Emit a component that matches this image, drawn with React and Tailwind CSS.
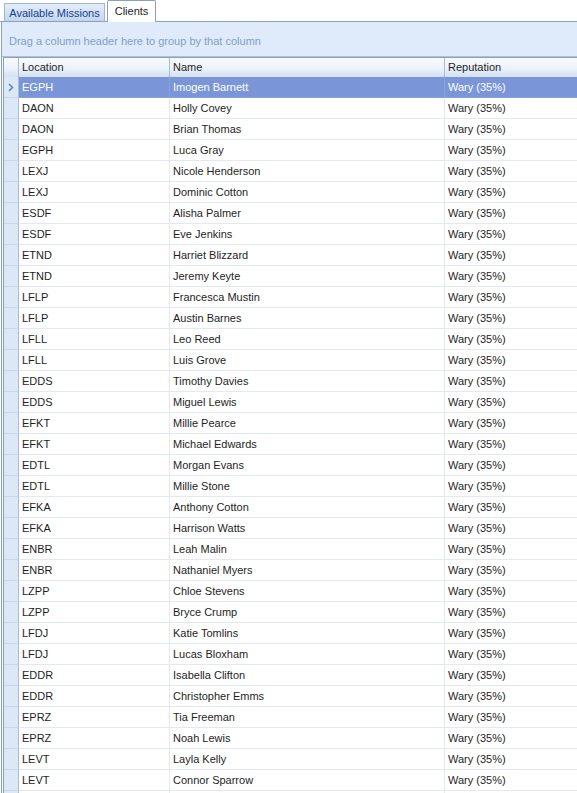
const rows = [
  ["EGPH", "Imogen Barnett"],
  ["DAON", "Holly Covey"],
  ["DAON", "Brian Thomas"],
  ["EGPH", "Luca Gray"],
  ["LEXJ", "Nicole Henderson"],
  ["LEXJ", "Dominic Cotton"],
  ["ESDF", "Alisha Palmer"],
  ["ESDF", "Eve Jenkins"],
  ["ETND", "Harriet Blizzard"],
  ["ETND", "Jeremy Keyte"],
  ["LFLP", "Francesca Mustin"],
  ["LFLP", "Austin Barnes"],
  ["LFLL", "Leo Reed"],
  ["LFLL", "Luis Grove"],
  ["EDDS", "Timothy Davies"],
  ["EDDS", "Miguel Lewis"],
  ["EFKT", "Millie Pearce"],
  ["EFKT", "Michael Edwards"],
  ["EDTL", "Morgan Evans"],
  ["EDTL", "Millie Stone"],
  ["EFKA", "Anthony Cotton"],
  ["EFKA", "Harrison Watts"],
  ["ENBR", "Leah Malin"],
  ["ENBR", "Nathaniel Myers"],
  ["LZPP", "Chloe Stevens"],
  ["LZPP", "Bryce Crump"],
  ["LFDJ", "Katie Tomlins"],
  ["LFDJ", "Lucas Bloxham"],
  ["EDDR", "Isabella Clifton"],
  ["EDDR", "Christopher Emms"],
  ["EPRZ", "Tia Freeman"],
  ["EPRZ", "Noah Lewis"],
  ["LEVT", "Layla Kelly"],
  ["LEVT", "Connor Sparrow"],
  ["", "", ""],
];

function Row({ loc, name, rep, selected }) {
  const line = selected ? "border-[#8aa3dd]" : "border-[#e2e9f4]";
  return (
    <div className={`flex h-[21px] ${selected ? "bg-[#7b96d8] text-white" : "text-[#1e1e1e]"}`}>
      <div className="w-[15px] shrink-0 bg-[#dde8f7] border-r border-[#a9bcd6] border-b border-b-[#c9d7ea] flex items-center justify-center">
        {selected && (
          <svg width="6" height="9" viewBox="0 0 6 9">
            <path d="M1 1 L4.5 4.5 L1 8" fill="none" stroke="#5d87c7" strokeWidth="1.6" />
          </svg>
        )}
      </div>
      <div className={`w-[151px] shrink-0 pl-[3px] pt-px flex items-center border-r border-b ${line}`}>{loc}</div>
      <div className={`w-[275px] shrink-0 pl-[3px] pt-px flex items-center border-r border-b ${line}`}>{name}</div>
      <div className={`flex-1 pl-[3px] pt-px flex items-center border-b ${line}`}>{rep}</div>
    </div>
  );
}

export default function App() {
  return (
    <div
      className="w-[577px] h-[793px] overflow-hidden bg-white text-[11px] leading-none"
      style={{ fontFamily: "Tahoma, 'Liberation Sans', Arial, sans-serif" }}
    >
      <div className="flex items-end h-[22px] pl-[4px] border-b border-[#8ba0bc]">
        <div className="h-[18px] w-[101px] pt-px flex items-center justify-center border border-b-0 border-[#a3b6d0] bg-gradient-to-b from-[#e4eefb] to-[#c3d6ef] text-[#15428b]">
          Available Missions
        </div>
        <div className="h-[22px] w-[49px] -mb-px ml-[2px] flex items-center justify-center border border-b-0 border-[#8ba0bc] bg-white text-[#1e1e1e] rounded-t-[2px]">
          Clients
        </div>
      </div>
      <div className="ml-[1px] border-l border-[#8ba0bc] bg-[#f5f8fd]">
        <div className="h-[35px] bg-[#dfeafa] flex items-center pl-[7px] pt-[5px] text-[#7f9fc9] border-b border-[#aac0dc]">
          Drag a column header here to group by that column
        </div>
        <div className="ml-[1px] border-l border-[#8ba0bc] bg-white">
          <div className="flex h-[20px] border-t border-[#8ba0bc] bg-gradient-to-b from-[#f9fbfe] via-[#edf3fb] to-[#d3e1f3] text-[#1e1e1e]">
            <div className="w-[15px] shrink-0 border-r border-[#a9bcd6]"></div>
            <div className="w-[151px] shrink-0 pl-[3px] flex items-center border-r border-[#a9bcd6]">Location</div>
            <div className="w-[275px] shrink-0 pl-[3px] flex items-center border-r border-[#a9bcd6]">Name</div>
            <div className="flex-1 pl-[3px] flex items-center">Reputation</div>
          </div>
          {rows.map(([loc, name], i) => (
            <Row key={i} loc={loc} name={name} rep={loc ? "Wary (35%)" : ""} selected={i === 0} />
          ))}
        </div>
      </div>
    </div>
  );
}
